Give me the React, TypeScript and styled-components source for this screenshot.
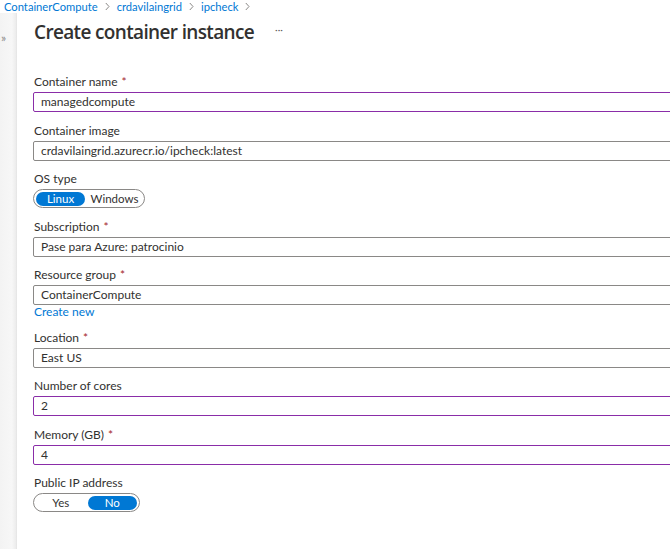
import React from "react";
import styled, { createGlobalStyle } from "styled-components";

const GlobalStyle = createGlobalStyle`
  html, body { margin: 0; padding: 0; background: #fff; overflow: hidden; }
  body { font-family: "Lato", "Open Sans", sans-serif; color: #323130; }
  * { box-sizing: border-box; }
`;

const Page = styled.div`
  width: 670px;
  height: 549px;
  display: flex;
  flex-direction: column;
  overflow: hidden;
`;

const Breadcrumb = styled.nav`
  height: 13px;
  display: flex;
  align-items: center;
  gap: 7px;
  padding-left: 4px;
  font-size: 11.2px;
  line-height: 13px;
  color: #0078d4;
`;

const Crumb = styled.span`
  white-space: nowrap;
`;

const Chevron = () => (
  <svg width="5" height="9" viewBox="0 0 5 9">
    <path d="M0.8 1 L4 4.5 L0.8 8" fill="none" stroke="#8a8886" strokeWidth="1" />
  </svg>
);

const Body = styled.div`
  flex: 1;
  display: flex;
`;

const Rail = styled.div`
  width: 17px;
  flex: none;
  background: linear-gradient(to right, #f3f3f3 0%, #f7f7f7 70%, #ececec 94%, #e2e2e2 100%);
  padding-top: 19px;
  padding-left: 1px;
  color: #8a8886;
  font-size: 12px;
  line-height: 12px;
`;

const Panel = styled.div`
  flex: 1;
  padding-left: 16px;
  min-width: 720px;
`;

const TitleRow = styled.div`
  display: flex;
  align-items: center;
  height: 34px;
  margin-top: 2px;
`;

const Title = styled.h1`
  margin: 0;
  font-family: "Open Sans", sans-serif;
  font-size: 19px;
  font-weight: 600;
  color: #323130;
  letter-spacing: -0.65px;
  padding-left: 1px;
`;

const More = styled.span`
  margin-left: 21px;
  font-size: 10px;
  color: #605e5c;
  position: relative;
  top: -3px;
`;

const Form = styled.div`
  padding-top: 25px;
  display: flex;
  flex-direction: column;
`;

const Field = styled.div`
  display: flex;
  flex-direction: column;
  margin-bottom: 10.5px;
`;

const Label = styled.label`
  font-size: 12px;
  line-height: 16px;
  height: 16px;
  margin-bottom: 2px;
  color: #323130;
  padding-left: 1px;
`;

const Req = styled.span`
  color: #a4262c;
  margin-left: 4px;
`;

const Input = styled.div<{ $dirty?: boolean }>`
  height: 20px;
  width: 700px;
  border: 1px solid ${(p) => (p.$dirty ? "#8a2da8" : "#8a8886")};
  border-radius: 2px;
  padding-left: 7px;
  font-size: 12px;
  line-height: 18px;
  color: #323130;
  white-space: nowrap;
`;

const Link = styled.span`
  font-size: 12px;
  line-height: 14px;
  height: 14px;
  color: #0078d4;
  padding-left: 1px;
`;

const Toggle = styled.div<{ $width: number }>`
  width: ${(p) => p.$width}px;
  height: 19px;
  border: 1px solid #8a8886;
  border-radius: 10px;
  display: flex;
  align-items: center;
  gap: 2px;
  padding: 0 2px;
`;

const Option = styled.span<{ $on?: boolean; $w: number }>`
  width: ${(p) => p.$w}px;
  height: 14px;
  border-radius: 7px;
  display: flex;
  align-items: center;
  justify-content: center;
  font-size: 11.5px;
  line-height: 14px;
  background: ${(p) => (p.$on ? "#0078d4" : "transparent")};
  color: ${(p) => (p.$on ? "#fff" : "#323130")};
`;

export default function App() {
  return (
    <Page>
      <GlobalStyle />
      <Breadcrumb>
        <Crumb>ContainerCompute</Crumb>
        <Chevron />
        <Crumb>crdavilaingrid</Crumb>
        <Chevron />
        <Crumb>ipcheck</Crumb>
        <Chevron />
      </Breadcrumb>
      <Body>
        <Rail>»</Rail>
        <Panel>
          <TitleRow>
            <Title>Create container instance</Title>
            <More>···</More>
          </TitleRow>
          <Form>
            <Field>
              <Label>Container name<Req>*</Req></Label>
              <Input $dirty>managedcompute</Input>
            </Field>
            <Field>
              <Label>Container image</Label>
              <Input>crdavilaingrid.azurecr.io/ipcheck:latest</Input>
            </Field>
            <Field>
              <Label>OS type</Label>
              <Toggle $width={112}>
                <Option $on $w={50}>Linux</Option>
                <Option $w={56}>Windows</Option>
              </Toggle>
            </Field>
            <Field>
              <Label>Subscription<Req>*</Req></Label>
              <Input>Pase para Azure: patrocinio</Input>
            </Field>
            <Field>
              <Label>Resource group<Req>*</Req></Label>
              <Input>ContainerCompute</Input>
              <Link>Create new</Link>
            </Field>
            <Field>
              <Label>Location<Req>*</Req></Label>
              <Input>East US</Input>
            </Field>
            <Field>
              <Label>Number of cores</Label>
              <Input $dirty>2</Input>
            </Field>
            <Field>
              <Label>Memory (GB)<Req>*</Req></Label>
              <Input $dirty>4</Input>
            </Field>
            <Field>
              <Label>Public IP address</Label>
              <Toggle $width={107}>
                <Option $w={50}>Yes</Option>
                <Option $on $w={50}>No</Option>
              </Toggle>
            </Field>
          </Form>
        </Panel>
      </Body>
    </Page>
  );
}
